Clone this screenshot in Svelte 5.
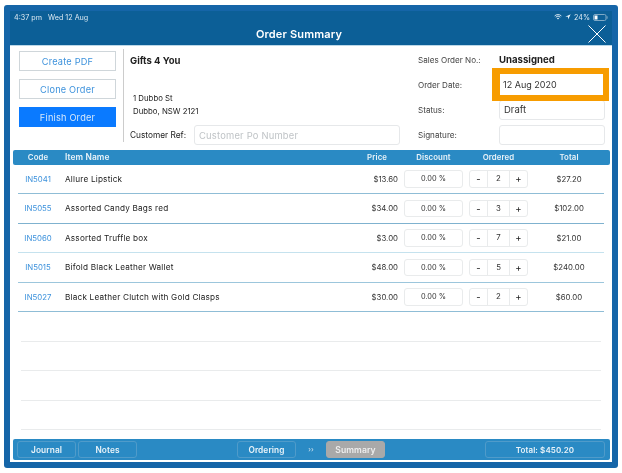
<script>
  const items = [
    { code: 'IN5041', name: 'Allure Lipstick', price: '$13.60', qty: 2, total: '$27.20', line: '#8fbdd6' },
    { code: 'IN5055', name: 'Assorted Candy Bags red', price: '$34.00', qty: 3, total: '$102.00', line: '#7fb2cf' },
    { code: 'IN5060', name: 'Assorted Truffle box', price: '$3.00', qty: 7, total: '$21.00', line: '#c5e2ee' },
    { code: 'IN5015', name: 'Bifold Black Leather Wallet', price: '$48.00', qty: 5, total: '$240.00', line: '#9cc6dc' },
    { code: 'IN5027', name: 'Black Leather Clutch with Gold Clasps', price: '$30.00', qty: 2, total: '$60.00', line: '#8fbdd6' }
  ];
</script>

<div class="frame">
  <header class="top">
    <div class="status">
      <span>4:37 pm&nbsp;&nbsp; Wed 12 Aug</span>
      <span class="sys">
        <svg width="8" height="6" viewBox="0 0 10 8"><path d="M0.5 2.6a6.4 6.4 0 0 1 9 0M2 4.2a4.2 4.2 0 0 1 6 0" fill="none" stroke="#e8f2f8" stroke-width="1.2"/><path d="M3.5 5.6a2.1 2.1 0 0 1 3 0L5 7.2z" fill="#e8f2f8"/></svg>
        <svg width="6" height="6" viewBox="0 0 8 8"><path d="M7.6 0.4 0.4 3.6H4V7.4z" fill="#e8f2f8"/></svg>
        <span>24%</span>
        <svg width="15" height="7" viewBox="0 0 15 7"><rect x="0.5" y="0.5" width="12.5" height="6" rx="1.5" fill="none" stroke="#7fa9c6"/><rect x="1.5" y="1.5" width="3" height="4" fill="#fff"/><rect x="13.6" y="2.3" width="1" height="2.4" fill="#7fa9c6"/></svg>
      </span>
    </div>
    <h1>Order Summary</h1>
    <svg class="close" width="18" height="18" viewBox="0 0 18 18"><path d="M0.5 0.5l17 17M17.5 0.5l-17 17" stroke="#fff" stroke-width="1" fill="none"/></svg>
  </header>

  <main class="sheet">
    <section class="info">
      <div class="actions">
        <button class="act">Create PDF</button>
        <button class="act">Clone Order</button>
        <button class="act primary">Finish Order</button>
      </div>
      <div class="customer">
        <strong>Gifts 4 You</strong>
        <address>1 Dubbo St<br />Dubbo, NSW 2121</address>
        <div class="ref">
          <span>Customer Ref:</span>
          <div class="field placeholder">Customer Po Number</div>
        </div>
      </div>
      <div class="meta">
        <span class="lab">Sales Order No.:</span><strong class="val">Unassigned</strong>
        <span class="lab">Order Date:</span>
        <div class="field big highlight">12 Aug 2020</div>
        <span class="lab">Status:</span><div class="field big">Draft</div>
        <span class="lab">Signature:</span><div class="field big"></div>
      </div>
    </section>

    <div class="thead gridrow">
      <span class="c">Code</span><span class="hname">Item Name</span><span class="r hprice">Price</span>
      <span class="c hpad">Discount</span><span class="c hpad">Ordered</span><span class="c hpad">Total</span>
    </div>

    <div class="rows">
      {#each items as it}
        <div class="row gridrow" style="border-color:{it.line}">
          <span class="c code">{it.code}</span>
          <span class="name">{it.name}</span>
          <span class="r">{it.price}</span>
          <div class="disc">0.00 %</div>
          <div class="stepper"><span class="sign">-</span><span class="qty">{it.qty}</span><span class="sign">+</span></div>
          <span class="c hpad">{it.total}</span>
        </div>
      {/each}
      {#each [0, 1, 2, 3] as _}
        <div class="row empty"></div>
      {/each}
    </div>

    <footer class="foot">
      <button class="tab">Journal</button>
      <button class="tab">Notes</button>
      <button class="tab ordering">Ordering</button>
      <span class="chev">››</span>
      <button class="tab current">Summary</button>
      <div class="tab total">Total: $450.20</div>
    </footer>
  </main>
</div>

<style>
  :global(body) {
    margin: 0;
    background: #fff;
  }
  .frame {
    box-sizing: border-box;
    width: 614px;
    height: 463px;
    margin: 5px 0 0 4px;
    padding: 6px;
    background: #1565a8;
    border-radius: 3px;
    display: flex;
    flex-direction: column;
    font-family: Inter, "Noto Sans", sans-serif;
    color: #222;
    filter: blur(0.35px);
  }
  .top {
    position: relative;
    height: 35px;
    flex: none;
    background: #0c5f97;
    color: #fff;
    border-bottom: 1px solid #bcd8e8;
    box-sizing: border-box;
  }
  .status {
    display: flex;
    justify-content: space-between;
    align-items: center;
    height: 12px;
    padding: 0 4px;
    font-size: 7.2px;
    color: #dce9f2;
  }
  .sys {
    display: flex;
    align-items: center;
    gap: 3px;
  }
  h1 {
    margin: 0;
    padding: 1px 24px 0 0;
    font-size: 11px;
    line-height: 20px;
    font-weight: 600;
    text-align: center;
    letter-spacing: 0.15px;
  }
  .close {
    position: absolute;
    right: 6px;
    top: 14px;
  }
  .sheet {
    flex: 1;
    background: #fff;
    display: flex;
    flex-direction: column;
    min-height: 0;
  }
  .info {
    display: flex;
    height: 104px;
    flex: none;
  }
  .actions {
    box-sizing: border-box;
    width: 114px;
    margin-top: 3px;
    height: 93px;
    padding: 2px 7px 0 9px;
    border-right: 1px solid #ccc;
    display: flex;
    flex-direction: column;
    gap: 8px;
    flex: none;
  }
  .act {
    height: 20px;
    padding: 0;
    border: 1px solid #cfd6da;
    background: #fff;
    color: #3d92dc;
    font: 400 9.2px Inter, sans-serif;
    letter-spacing: 0.2px;
  }
  .act.primary {
    background: #0a7aff;
    border-color: #0a7aff;
    color: #d8e9fb;
  }
  .customer {
    box-sizing: border-box;
    width: 278px;
    padding: 10px 0 0 6px;
    display: flex;
    flex-direction: column;
    flex: none;
  }
  .customer strong {
    font-size: 9.5px;
    font-weight: 700;
    line-height: 10px;
  }
  address {
    font-style: normal;
    font-size: 7.8px;
    line-height: 13px;
    margin: 26px 0 0 3px;
  }
  .ref {
    display: flex;
    align-items: center;
    gap: 8px;
    margin-top: 7px;
    font-size: 8.3px;
    white-space: nowrap;
  }
  .field {
    box-sizing: border-box;
    height: 20px;
    border: 1px solid #e6e8ea;
    border-radius: 3px;
    display: flex;
    align-items: center;
    padding-left: 4px;
    background: #fff;
  }
  .placeholder {
    width: 206px;
    color: #bfc3c6;
    font-size: 9.4px;
    letter-spacing: 0.2px;
  }
  .meta {
    display: grid;
    grid-template-columns: 81px 106px;
    grid-template-rows: repeat(4, 25px);
    align-items: center;
    margin: 1px 0 0 16px;
    font-size: 8.1px;
    color: #444;
  }
  .val {
    font-size: 9.6px;
    color: #222;
    font-weight: 700;
  }
  .big {
    font-size: 9.5px;
    color: #333;
  }
  .highlight {
    position: relative;
    height: 21px;
    margin: 0 2px 0 1px;
    padding-left: 3px;
    border: 0;
    border-radius: 0;
    font-size: 9px;
    box-shadow: 0 0 0 6px #f79c00, -2px 0 0 6px #f79c00;
    z-index: 1;
  }
  .gridrow {
    display: grid;
    grid-template-columns: 40px 301px 39px 65px 65px 76px;
    align-items: center;
  }
  .thead {
    flex: none;
    box-sizing: border-box;
    margin: 0 2px 0 3px;
    height: 14.5px;
    padding: 0 0 0 5px;
    background: #2a8ac4;
    border-radius: 2px;
    color: #e9f3f9;
    font-size: 7.8px;
    font-weight: 600;
    letter-spacing: 0.1px;
  }
  .hname {
    padding-left: 7px;
    font-size: 8.4px;
  }
  .hprice {
    padding-right: 11px;
  }
  .hpad {
    padding-left: 6px;
  }
  .c { text-align: center; }
  .r { text-align: right; }
  .rows {
    flex: 1;
    display: flex;
    flex-direction: column;
    margin: 0 8px;
    min-height: 0;
  }
  .row {
    box-sizing: border-box;
    height: 29.5px;
    flex: none;
    border-bottom: 1px solid #8fbdd6;
    font-size: 7.8px;
    color: #333;
  }
  .row.empty {
    border-bottom-color: #e9ebec;
    margin: 0 3px;
  }
  .code {
    color: #3d92dc;
  }
  .name {
    padding-left: 7px;
    color: #222;
    font-size: 8.2px;
    letter-spacing: 0.2px;
  }
  .disc {
    box-sizing: border-box;
    margin-left: 6px;
    height: 17.5px;
    width: 59px;
    border: 1px solid #e9ebec;
    border-radius: 3px;
    display: flex;
    align-items: center;
    justify-content: center;
    font-size: 7.4px;
  }
  .stepper {
    box-sizing: border-box;
    margin-left: 6px;
    width: 59px;
    height: 17.5px;
    border: 1px solid #e9ebec;
    border-radius: 3px;
    display: grid;
    grid-template-columns: 17px 23px 1fr;
    align-items: center;
    text-align: center;
  }
  .stepper span {
    line-height: 15.5px;
  }
  .sign {
    font-size: 9.5px;
    color: #222;
  }
  .qty {
    border-left: 1px solid #e9ebec;
    border-right: 1px solid #e9ebec;
  }
  .foot {
    flex: none;
    display: flex;
    align-items: center;
    box-sizing: border-box;
    height: 21px;
    margin: 0 2px 2px 3px;
    padding: 0 5px 0 4px;
    background: #2a8ac4;
    border-radius: 2px;
  }
  .tab {
    box-sizing: border-box;
    width: 59px;
    height: 17px;
    padding: 0;
    margin-right: 2px;
    border: 1px solid #4f9bca;
    border-radius: 3px;
    background: transparent;
    color: #e9f3f9;
    font: 600 8.3px Inter, sans-serif;
    letter-spacing: 0.1px;
    display: flex;
    align-items: center;
    justify-content: center;
  }
  .ordering {
    margin-left: 98px;
    margin-right: 0;
  }
  .chev {
    width: 30px;
    text-align: center;
    color: #cfe2ee;
    font-size: 7px;
  }
  .current {
    background: #a9a9a9;
    border-color: #a9a9a9;
    color: #eee;
    font-size: 8.6px;
  }
  .total {
    width: 120px;
    margin-left: auto;
    margin-right: 0;
    font-size: 8px;
  }
</style>
